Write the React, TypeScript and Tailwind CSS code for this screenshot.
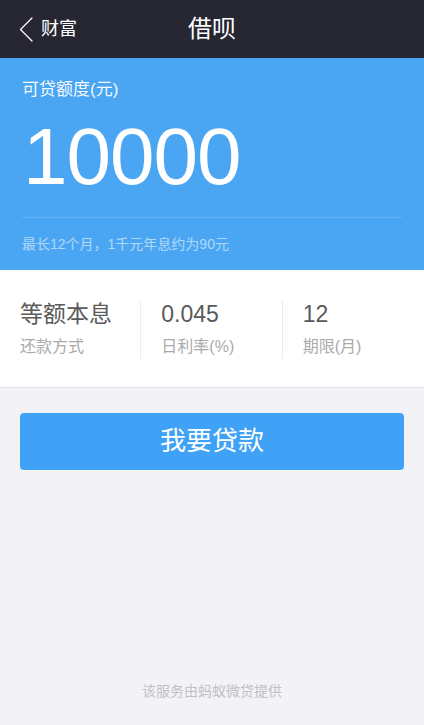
const font = { fontFamily: '"Liberation Sans", "Noto Sans CJK SC", sans-serif' };

function Stat({ value, label, divider }: { value: string; label: string; divider?: boolean }) {
  return (
    <div className="flex-1 flex">
      <div className="flex-1 pl-5 flex flex-col">
        <span className="text-[23px] leading-[28px] text-[#5a5a5a]">{value}</span>
        <span className="mt-[8px] text-[16px] leading-[22px] text-[#aaaaaa]">{label}</span>
      </div>
      {divider && <div className="w-px bg-[#ececec] my-[1px]" />}
    </div>
  );
}

export default function App() {
  return (
    <div className="w-[424px] h-[725px] flex flex-col bg-[#f3f3f7]" style={font}>
      {/* Nav bar */}
      <header className="h-[58px] bg-[#262733] flex items-center relative">
        <div className="flex items-center pl-[19px] text-white">
          <svg width="14" height="25" viewBox="0 0 14 25" fill="none">
            <path d="M13 1 L1.5 12.5 L13 24" stroke="white" strokeWidth="1.3" strokeLinecap="round" strokeLinejoin="round" />
          </svg>
          <span className="text-[18px] ml-[8px]">财富</span>
        </div>
        <h1 className="absolute left-1/2 -translate-x-1/2 text-[24px] text-white font-normal">借呗</h1>
      </header>

      {/* Quota */}
      <section className="bg-[#4aa6f3] px-[22px] pt-[20px] h-[212px] flex flex-col">
        <p className="text-[17px] leading-[24px] text-white/95">可贷额度(元)</p>
        <p className="text-[80px] leading-[80px] mt-[15px] ml-[1px] text-white font-light tracking-[-1px]">10000</p>
        <div className="h-px bg-white/15 mt-[20px]" />
        <p className="mt-[16px] text-[14px] leading-[20px] text-white/55">最长12个月，1千元年息约为90元</p>
      </section>

      {/* Terms */}
      <section className="bg-white h-[118px] border-b border-[#e3e3e6] flex items-center pt-[2px]">
        <div className="flex w-full h-[60px]">
          <Stat value="等额本息" label="还款方式" divider />
          <Stat value="0.045" label="日利率(%)" divider />
          <Stat value="12" label="期限(月)" />
        </div>
      </section>

      <div className="px-5 pt-[25px]">
        <button className="w-full h-[57px] rounded-[4px] bg-[#40a2f7] text-white text-[26px]">我要贷款</button>
      </div>

      <p className="mt-auto mb-[23px] text-center text-[14px] text-[#c0c0c4]">该服务由蚂蚁微贷提供</p>
    </div>
  );
}
